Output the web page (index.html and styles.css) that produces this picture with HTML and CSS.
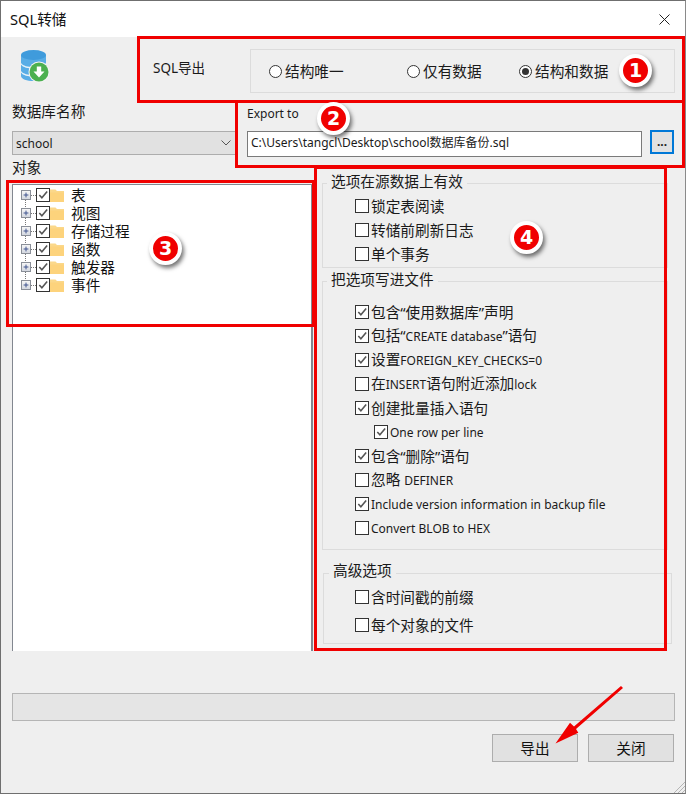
FILE: index.html
```html
<!DOCTYPE html>
<html lang="zh">
<head>
<meta charset="utf-8">
<title>SQL转储</title>
<link rel="stylesheet" href="styles.css">
</head>
<body>
<svg class="defs" width="0" height="0" aria-hidden="true">
  <symbol id="tick" viewBox="0 0 13 13"><path d="M2.5 6.5 5.3 9.6 11 2.8" fill="none" stroke="#555" stroke-width="1.7"/></symbol>
  <symbol id="folder" viewBox="0 0 14 14"><path d="M0 1.5h5.5l1.5 1.5h7v2H0z" fill="#fbd88a"/><path d="M0 4.5h14V14H0z" fill="#fdd37c"/></symbol>
  <symbol id="plus" viewBox="0 0 10 10"><path d="M2 5h6M5 2v6" stroke="#3c4f8c" stroke-width="1.2" fill="none"/></symbol>
</svg>
<div class="window">
  <header class="titlebar">
    <span class="title">SQL转储</span>
    <svg class="close" width="11" height="11" viewBox="0 0 11 11"><path d="M.5.5l10 10M10.5.5l-10 10" stroke="#222" stroke-width="1" fill="none"/></svg>
  </header>
  <div class="content">
    <div class="head-row">
      <svg class="db-icon" width="32" height="34" viewBox="0 0 32 34">
        <path d="M1 6h25v21c0 3-6 5-12.500 5S1 30 1 27z" fill="#59ade6"/>
        <path d="M1 14c2 3 7 4 12.500 4S24 17 26 14v1.500c-2 3-7 4-12.500 4S3 18.500 1 15.500zM1 22c2 3 7 4 12.500 4S24 25 26 22v1.500c-2 3-7 4-12.500 4S3 26.500 1 23.500z" fill="#e8f3fa"/>
        <ellipse cx="13.500" cy="6" rx="12.500" ry="5" fill="#3f9bdc"/>
        <circle cx="19" cy="23" r="10.500" fill="#f4f4f4"/>
        <circle cx="19" cy="23" r="9.500" fill="#4cb050"/>
        <path d="M16.800 17.500h4.400v5h3.300L19 28.500l-5.500-6h3.300z" fill="#fff"/>
      </svg>
      <span class="sql-label">SQL导出</span>
      <div class="radio-group">
        <label class="radio radio-a"><span class="dot"></span>结构唯一</label>
        <label class="radio radio-b"><span class="dot"></span>仅有数据</label>
        <label class="radio radio-c"><span class="dot on"></span>结构和数据</label>
      </div>
    </div>
    <div class="source-row">
      <div class="db-col">
        <div class="field-label">数据库名称</div>
        <div class="select"><span class="select-text">school</span><svg width="10" height="6" viewBox="0 0 10 6"><path d="M.5.5 5 5 9.500.5" fill="none" stroke="#555"/></svg></div>
      </div>
      <div class="export-col">
        <div class="export-label">Export to</div>
        <div class="export-line">
          <div class="path">C:\Users\tangcl\Desktop\school数据库备份.sql</div>
          <button class="browse">...</button>
        </div>
      </div>
    </div>
    <div class="main-row">
      <div class="tree-col">
        <div class="tree-label">对象</div>
        <ul class="tree">
          <li class="node"><span class="exp"><svg width="8" height="8"><use href="#plus"/></svg></span><span class="cb tree-cb"><svg><use href="#tick"/></svg></span><svg class="folder"><use href="#folder"/></svg><span>表</span></li>
          <li class="node"><span class="exp"><svg width="8" height="8"><use href="#plus"/></svg></span><span class="cb tree-cb"><svg><use href="#tick"/></svg></span><svg class="folder"><use href="#folder"/></svg><span>视图</span></li>
          <li class="node"><span class="exp"><svg width="8" height="8"><use href="#plus"/></svg></span><span class="cb tree-cb"><svg><use href="#tick"/></svg></span><svg class="folder"><use href="#folder"/></svg><span>存储过程</span></li>
          <li class="node"><span class="exp"><svg width="8" height="8"><use href="#plus"/></svg></span><span class="cb tree-cb"><svg><use href="#tick"/></svg></span><svg class="folder"><use href="#folder"/></svg><span>函数</span></li>
          <li class="node"><span class="exp"><svg width="8" height="8"><use href="#plus"/></svg></span><span class="cb tree-cb"><svg><use href="#tick"/></svg></span><svg class="folder"><use href="#folder"/></svg><span>触发器</span></li>
          <li class="node"><span class="exp"><svg width="8" height="8"><use href="#plus"/></svg></span><span class="cb tree-cb"><svg><use href="#tick"/></svg></span><svg class="folder"><use href="#folder"/></svg><span>事件</span></li>
        </ul>
      </div>
      <div class="options-col">
        <fieldset class="group group-source">
          <legend>选项在源数据上有效</legend>
          <div class="opt"><span class="cb"></span>锁定表阅读</div>
          <div class="opt"><span class="cb"></span>转储前刷新日志</div>
          <div class="opt"><span class="cb"></span>单个事务</div>
        </fieldset>
        <fieldset class="group group-file">
          <legend>把选项写进文件</legend>
          <div class="opt"><span class="cb"><svg><use href="#tick"/></svg></span><span>包含“使用数据库”声明</span></div>
          <div class="opt"><span class="cb"><svg><use href="#tick"/></svg></span><span>包括“<span class="small">CREATE database</span>”语句</span></div>
          <div class="opt"><span class="cb"><svg><use href="#tick"/></svg></span><span>设置<span class="small">FOREIGN_KEY_CHECKS=0</span></span></div>
          <div class="opt"><span class="cb"></span><span>在<span class="small">INSERT</span>语句附近添加<span class="small">lock</span></span></div>
          <div class="opt"><span class="cb"><svg><use href="#tick"/></svg></span>创建批量插入语句</div>
          <div class="opt opt-sub"><span class="cb"><svg><use href="#tick"/></svg></span><span class="small latin">One row per line</span></div>
          <div class="opt"><span class="cb"><svg><use href="#tick"/></svg></span>包含“删除”语句</div>
          <div class="opt"><span class="cb"></span><span>忽略 <span class="small">DEFINER</span></span></div>
          <div class="opt"><span class="cb"><svg><use href="#tick"/></svg></span><span class="small latin">Include version information in backup file</span></div>
          <div class="opt"><span class="cb"></span><span class="small latin">Convert BLOB to HEX</span></div>
        </fieldset>
        <fieldset class="group group-adv">
          <legend>高级选项</legend>
          <div class="opt opt-tall"><span class="cb"></span>含时间戳的前缀</div>
          <div class="opt opt-tall"><span class="cb"></span>每个对象的文件</div>
        </fieldset>
      </div>
    </div>
    <div class="progress"></div>
    <div class="actions">
      <button class="btn">导出</button>
      <button class="btn">关闭</button>
    </div>
  </div>

  <div class="mark mark-1"></div>
  <div class="mark mark-2"></div>
  <div class="mark mark-3"></div>
  <div class="mark mark-4"></div>
  <div class="badge badge-1">1</div>
  <div class="badge badge-2">2</div>
  <div class="badge badge-3">3</div>
  <div class="badge badge-4">4</div>
  <svg class="arrow" width="72" height="62" viewBox="0 0 72 62">
    <path d="M66 1 68 3 21 44 23.300 47.700.5 58.500 15 37.700 19 41.500z" fill="#f00000"/>
  </svg>
  <svg class="grip" width="11" height="11" viewBox="0 0 11 11"><path d="M0 11 11 0M4 11l7-7M8 11l3-3" stroke="#b5b5b5" stroke-width="1" fill="none"/></svg>
</div>
</body>
</html>
```
FILE: styles.css
```css
* { box-sizing: border-box; }
html, body { margin: 0; padding: 0; }
body {
  width: 686px;
  height: 794px;
  overflow: hidden;
  font-family: "Noto Sans", "Noto Sans CJK SC", sans-serif;
  font-size: 14.67px;
  line-height: 20px;
  color: #1a1a1a;
}
.defs { position: absolute; }
.window {
  position: relative;
  width: 686px;
  height: 794px;
  border: 1px solid #6f6f6f;
  border-right-color: #8a8a8a;
  background: #efefef;
  display: flex;
  flex-direction: column;
}
.titlebar {
  height: 36px;
  flex: none;
  background: #fff;
  display: flex;
  align-items: center;
  justify-content: space-between;
  padding: 0 15px 0 9px;
}
.title { color: #111; padding-bottom: 1px; }
.content {
  flex: 1;
  display: flex;
  flex-direction: column;
  padding: 0 10px 0 11px;
}

/* top row */
.head-row {
  height: 66px;
  display: flex;
  align-items: flex-start;
}
.db-icon { margin: 12px 0 0 8px; flex: none; }
.sql-label { margin: 21px 0 0 101px; width: 97px; flex: none; font-size: 13.500px; }
.radio-group {
  margin-top: 12px;
  width: 425px;
  height: 44px;
  border: 1px solid #dcdcdc;
  display: flex;
  align-items: center;
  padding-left: 18px;
}
.radio { display: flex; align-items: center; gap: 3px; }
.radio-a { width: 138px; }
.radio-b { width: 112px; }
.dot {
  width: 13px;
  height: 13px;
  border-radius: 50%;
  border: 1px solid #333;
  background: #fff;
  flex: none;
  display: flex;
  align-items: center;
  justify-content: center;
}
.dot.on::after {
  content: "";
  width: 7px;
  height: 7px;
  border-radius: 50%;
  background: #333;
}

/* source row */
.source-row {
  height: 57px;
  display: flex;
  gap: 11px;
}
.db-col { width: 224px; flex: none; }
.field-label { height: 28px; line-height: 17px; }
.select {
  height: 24px;
  border: 1px solid #adadad;
  background: #e1e1e1;
  display: flex;
  align-items: center;
  justify-content: space-between;
  padding: 0 4px 0 3px;
  font-size: 12px;
}
.select-text { padding-top: 2px; }
.export-col { flex: 1; }
.export-label { height: 28px; font-size: 12px; line-height: 22px; }
.export-line { display: flex; gap: 8px; align-items: flex-start; }
.path {
  width: 395px;
  height: 26px;
  flex: none;
  border: 1px solid #7a7a7a;
  background: #fff;
  padding: 0 3px;
  line-height: 22px;
  font-size: 12px;
  white-space: nowrap;
}
.browse {
  width: 24px;
  height: 24px;
  margin-top: -1px;
  border: 2px solid #0078d7;
  background: #e1e1e1;
  padding: 0;
  font: bold 12px/16px "Noto Sans", sans-serif;
  color: #222;
}

/* main row */
.main-row { height: 491px; display: flex; }
.tree-col { width: 301px; flex: none; }
.tree-label { height: 24px; line-height: 15px; }
.tree {
  list-style: none;
  margin: 0;
  height: 467px;
  background: #fff;
  border: 1px solid #828790;
  border-bottom: 0;
  border-width: 1px 2px 0 1px;
  padding: 1px 0 0 8px;
}
.node {
  position: relative;
  height: 18px;
  display: flex;
  align-items: center;
  line-height: 18px;
  color: #111;
}
.node::after {
  content: "";
  position: absolute;
  left: 10px;
  top: 9px;
  width: 5px;
  border-top: 1px dotted #777;
}
.node::before {
  content: "";
  position: absolute;
  left: 4px;
  top: 9px;
  height: 18px;
  border-left: 1px dotted #777;
}
.node:last-child::before { display: none; }
.exp {
  position: relative;
  z-index: 1;
  width: 10px;
  height: 10px;
  flex: none;
  border: 1px solid #8a8f98;
  background: linear-gradient(#f6f6f6, #d4d8e0);
  margin-right: 5px;
  display: flex;
}
.exp svg { display: block; }
.cb {
  width: 14px;
  height: 14px;
  border: 1px solid #333;
  background: #fff;
  flex: none;
  margin-right: 2px;
  display: inline-flex;
}
.cb svg { width: 12px; height: 12px; display: block; }
.tree-cb { width: 14px; height: 14px; margin-right: 0; background: transparent; }
.folder { width: 14px; height: 14px; margin: 0 7px 0 0; flex: none; }

/* options */
.options-col {
  margin-left: 9px;
  width: 352px;
  flex: none;
  padding-top: 13px;
}
.group {
  margin: 0;
  border: 1px solid #dcdcdc;
  min-width: 0;
  padding-left: 0;
  padding-right: 0;
  padding-bottom: 0;
}
.group legend {
  height: 20px;
  line-height: 17px;
  padding: 0 4px 0 4px;
  margin-left: 4px;
  color: #1a1a1a;
}
.group-source { width: 346px; height: 95px; padding-top: 1px; }
.group-file { width: 346px; height: 279px; margin-top: 3px; padding-top: 9px; }
.group-adv { width: 349px; height: 81px; margin: 13px 0 0 1px; padding-top: 0; }
.group-adv legend { line-height: 14px; margin-left: 5px; }
.opt {
  height: 24px;
  display: flex;
  align-items: center;
  white-space: nowrap;
  padding-left: 32px;
}
.group-adv .opt { padding-left: 31px; }
.opt-sub { padding-left: 51px; }
.opt-tall { height: 28px; }
.small { font-size: 12px; }
.latin { padding-top: 2px; }

/* bottom */
.progress {
  flex: none;
  margin-top: 42px;
  height: 28px;
  border: 1px solid #b5b5b5;
  background: #e5e5e5;
}
.actions {
  margin-top: 13px;
  padding-right: 1px;
  display: flex;
  justify-content: flex-end;
  gap: 10px;
}
.btn {
  width: 86px;
  height: 28px;
  border: 1px solid #adadad;
  background: #e1e1e1;
  padding: 0;
  font: inherit;
  color: #111;
}

/* annotations, drawn over the dialog */
.mark { position: absolute; border: 3px solid #f00000; pointer-events: none; }
.mark-1 { left: 136px; top: 35px; width: 548px; height: 67px; }
.mark-2 { left: 234px; top: 99px; width: 450px; height: 68px; }
.mark-3 { left: 5px; top: 179px; width: 309px; height: 147px; }
.mark-4 { left: 313px; top: 165px; width: 353px; height: 485px; }
.badge {
  position: absolute;
  width: 33px;
  height: 33px;
  border-radius: 50%;
  border: 4px solid #fff;
  background: #f00000;
  color: #fff;
  font: bold 19px/25px "DejaVu Sans", sans-serif;
  text-align: center;
  box-shadow: 2px 3px 4px rgba(0, 0, 0, .55);
}
.badge-1 { left: 618px; top: 53px; }
.badge-2 { left: 316px; top: 101px; }
.badge-3 { left: 148px; top: 231px; }
.badge-4 { left: 509px; top: 220px; }
.arrow { position: absolute; left: 554px; top: 684px; }
.grip { position: absolute; right: 0; bottom: 0; }
```
